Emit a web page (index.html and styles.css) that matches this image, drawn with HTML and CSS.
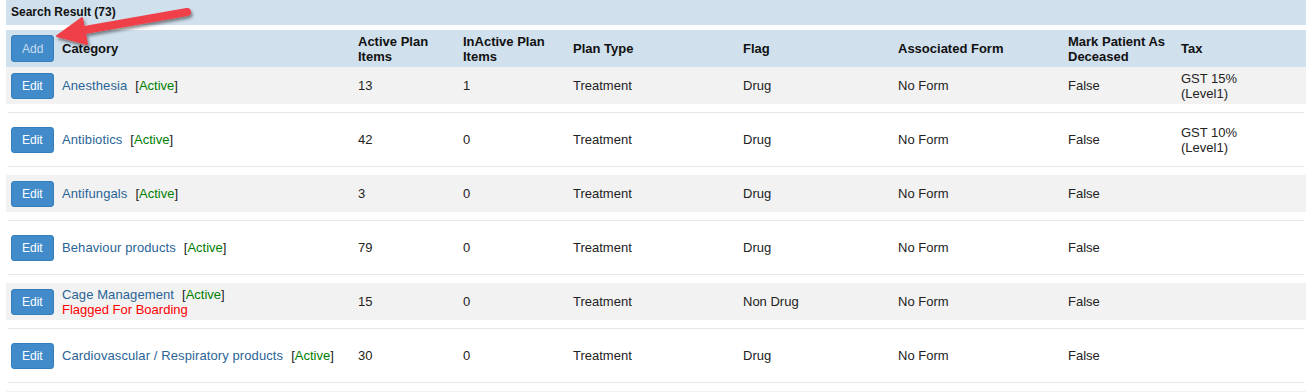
FILE: index.html
```html
<html>

<head>
    <link rel="stylesheet" href="styles.css">
</head>

<body>
    <div class="panel">
        <div class="panelTitle">Search Result (73)</div>

        <div class="gridRow headRow">
            <div class="btnCell"><button class="btn btnAdd">Add</button></div>
            <div>Category</div>
            <div>Active Plan<br>Items</div>
            <div>InActive Plan<br>Items</div>
            <div>Plan Type</div>
            <div>Flag</div>
            <div>Associated Form</div>
            <div>Mark Patient As<br>Deceased</div>
            <div>Tax</div>
        </div>

        <div class="gridRow odd">
            <div class="btnCell"><button class="btn">Edit</button></div>
            <div><a class="catName">Anesthesia</a><span class="status">[<span class="active">Active</span>]</span></div>
            <div>13</div>
            <div>1</div>
            <div>Treatment</div>
            <div>Drug</div>
            <div>No Form</div>
            <div>False</div>
            <div>GST 15%<br>(Level1)</div>
        </div>
        <div class="sep"></div>

        <div class="gridRow">
            <div class="btnCell"><button class="btn">Edit</button></div>
            <div><a class="catName">Antibiotics</a><span class="status">[<span class="active">Active</span>]</span></div>
            <div>42</div>
            <div>0</div>
            <div>Treatment</div>
            <div>Drug</div>
            <div>No Form</div>
            <div>False</div>
            <div>GST 10%<br>(Level1)</div>
        </div>
        <div class="sep"></div>

        <div class="gridRow odd">
            <div class="btnCell"><button class="btn">Edit</button></div>
            <div><a class="catName">Antifungals</a><span class="status">[<span class="active">Active</span>]</span></div>
            <div>3</div>
            <div>0</div>
            <div>Treatment</div>
            <div>Drug</div>
            <div>No Form</div>
            <div>False</div>
            <div></div>
        </div>
        <div class="sep"></div>

        <div class="gridRow">
            <div class="btnCell"><button class="btn">Edit</button></div>
            <div><a class="catName">Behaviour products</a><span class="status">[<span class="active">Active</span>]</span></div>
            <div>79</div>
            <div>0</div>
            <div>Treatment</div>
            <div>Drug</div>
            <div>No Form</div>
            <div>False</div>
            <div></div>
        </div>
        <div class="sep"></div>

        <div class="gridRow odd">
            <div class="btnCell"><button class="btn">Edit</button></div>
            <div><a class="catName">Cage Management</a><span class="status">[<span class="active">Active</span>]</span><br><span class="flagged">Flagged For Boarding</span></div>
            <div>15</div>
            <div>0</div>
            <div>Treatment</div>
            <div>Non Drug</div>
            <div>No Form</div>
            <div>False</div>
            <div></div>
        </div>
        <div class="sep"></div>

        <div class="gridRow">
            <div class="btnCell"><button class="btn">Edit</button></div>
            <div><a class="catName">Cardiovascular / Respiratory products</a><span class="status">[<span class="active">Active</span>]</span></div>
            <div>30</div>
            <div>0</div>
            <div>Treatment</div>
            <div>Drug</div>
            <div>No Form</div>
            <div>False</div>
            <div></div>
        </div>
        <div class="sep lastSep"></div>

        <!-- top edge of the next (cut off) row -->
        <div class="odd nextRowEdge"></div>
    </div>

    <!-- annotation arrow pointing at the Add button -->
    <svg class="arrow" width="200" height="60" viewBox="0 0 200 60">
        <defs>
            <filter id="shadow" x="-20%" y="-40%" width="140%" height="180%">
                <feDropShadow dx="1.5" dy="2.5" stdDeviation="1.5" flood-color="#000" flood-opacity="0.45" />
            </filter>
        </defs>
        <g filter="url(#shadow)" fill="#ef4049" stroke="#ef4049">
            <line x1="187" y1="12" x2="82" y2="30.5" stroke-width="8" stroke-linecap="round" />
            <polygon points="57,36 82,18 87,44" stroke-width="2" stroke-linejoin="round" />
        </g>
    </svg>
</body>

</html>
```

FILE: styles.css
```css
body {
    margin: 0;
    padding: 0;
    background: #fff;
    font-family: "Liberation Sans", Arial, sans-serif;
    font-size: 13px;
    color: #222;
}

.panel {
    padding: 0 6px;
}

.panelTitle {
    height: 25px;
    line-height: 25px;
    padding-left: 5px;
    margin-bottom: 5px;
    background: #d0e0ed;
    font-size: 12px;
    font-weight: bold;
    color: #111;
}

.gridRow {
    display: grid;
    grid-template-columns: 56px 296px 105px 110px 170px 155px 170px 113px 1fr;
    align-items: center;
    height: 37px;
    line-height: 15px;
}

.headRow {
    background: #d0e0ed;
    font-weight: bold;
    color: #111;
}

.odd {
    background: #f2f2f2;
}

.sep {
    height: 1px;
    margin: 8px 2px;
    background: #e6e6e6;
}

.lastSep {
    margin-bottom: 8px;
}

.nextRowEdge {
    height: 1px;
}

.btnCell {
    padding-left: 5px;
    display: flex;
    align-items: center;
}

.btn {
    height: 26px;
    padding: 0 10px;
    border: 1px solid #357ebd;
    border-radius: 3px;
    background: #428bca;
    color: #fff;
    font-family: "Liberation Sans", Arial, sans-serif;
    font-size: 12px;
    line-height: 24px;
}

.btnAdd {
    color: #c9dcef;
    width: 43px;
    height: 27px;
}

.catName {
    color: #2a6496;
    letter-spacing: 0.1px;
}

.status {
    margin-left: 8px;
    color: #222;
}

.active {
    color: #008000;
}

.flagged {
    color: #ff0000;
}

.arrow {
    position: absolute;
    left: 0;
    top: 0;
}
```
